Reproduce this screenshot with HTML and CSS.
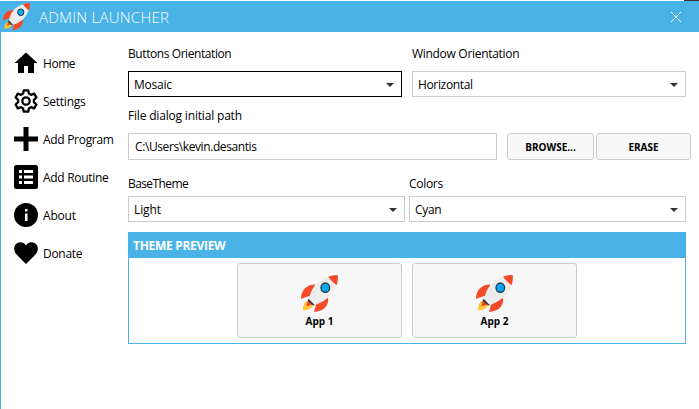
FILE: index.html
```html
<!DOCTYPE html>
<html lang="en">
<head>
<meta charset="utf-8">
<title>Admin Launcher</title>
<link rel="stylesheet" href="styles.css">
</head>
<body>
<svg class="defs" width="0" height="0">
  <symbol id="rocket" viewBox="0 0 108 108">
    <path fill="#f44a28" d="M0 70C0 46 15 28 42 28L30 60L10 66ZM38 108L44 86L79 66C83 93 62 107 38 108Z"/>
    <path fill="#ffc533" d="M20 73Q4 84 6 103Q27 103 37 88Z"/>
    <path fill="#e8412a" d="M20 74L16 91L34 86Z"/>
    <path fill="#263844" d="M22 69L41 88L35 88L20 75Z"/>
    <path fill="#ececec" d="M24 68C31 31 60 3 106 1C108 42 81 75 41 87Z"/>
    <path fill="#f44a28" d="M79 5Q92 0 107 0Q109 16 104 30Q90 20 79 5Z"/>
    <ellipse cx="71" cy="37" rx="12.5" ry="13.5" fill="#03a9f4" stroke="#263844" stroke-width="4"/>
  </symbol>
</svg>
<div class="window">
  <header class="titlebar">
    <svg class="logo"><use href="#rocket"/></svg>
    <h1>ADMIN LAUNCHER</h1>
    <svg class="close" viewBox="0 0 10 10"><path d="M0 0L10 10M10 0L0 10"/></svg>
  </header>
  <div class="body">
    <nav>
      <a><svg viewBox="0 0 24 24"><path d="M10 22v-7h4v7h6V12h3.500L12 1.500.5 12H4v10Z"/></svg><span class="t-home">Home</span></a>
      <a><svg viewBox="0 0 24 24"><g fill="none" stroke="#000" stroke-width="2.3" stroke-linejoin="round"><circle cx="12" cy="12" r="3.7"/><path d="M9.800 1.300h4.400l.7 3.300 2.100 1.200 3.200-1.100 2.200 3.800-2.500 2.300v2.400l2.500 2.300-2.200 3.800-3.200-1.100-2.100 1.200-.7 3.300H9.800l-.7-3.300L7 18.200l-3.200 1.100-2.200-3.800 2.500-2.300v-2.400L1.600 8.500l2.200-3.800L7 5.800l2.100-1.200Z"/></g></svg><span class="t-settings">Settings</span></a>
      <a><svg viewBox="0 0 24 24"><path d="M9.500 0h5v9.500H24v5h-9.500V24h-5v-9.500H0v-5h9.500Z"/></svg><span class="t-program">Add Program</span></a>
      <a><svg viewBox="0 0 24 24"><rect width="24" height="24" rx="2.5"/><path fill="#fff" d="M5 5h3v3H5zM10 5h9v3h-9zM5 10.500h3v3H5zM10 10.500h9v3h-9zM5 16h3v3H5zM10 16h9v3h-9z"/></svg><span class="t-routine">Add Routine</span></a>
      <a><svg viewBox="0 0 24 24"><circle cx="12" cy="12" r="12"/><path fill="#fff" d="M11 6h2.500v2.500H11zM11 10.500h2.500V18H11z"/></svg><span class="t-about">About</span></a>
      <a><svg viewBox="0 0 24 24"><path d="M12 23L3 14C-1 10-.5 4.500 3 2.200 6 .300 10 1 12 4.500 14 1 18 .300 21 2.200 24.500 4.500 25 10 21 14Z"/></svg><span class="t-donate">Donate</span></a>
    </nav>
    <main>
      <div class="row orient">
        <div class="field"><label><span class="t-buttons">Buttons Orientation</span></label><div class="select focus"><span class="t-mosaic">Mosaic</span><i></i></div></div>
        <div class="field"><label><span class="t-window">Window Orientation</span></label><div class="select"><span class="t-horizontal">Horizontal</span><i></i></div></div>
      </div>
      <label class="path-label"><span class="t-file">File dialog initial path</span></label>
      <div class="path">
        <div class="input"><span class="t-path">C:\Users\kevin.desantis</span></div>
        <button class="browse"><span class="t-browse">BROWSE...</span></button>
        <button class="erase"><span class="t-erase">ERASE</span></button>
      </div>
      <div class="row theme">
        <div class="field"><label><span class="t-base">BaseTheme</span></label><div class="select"><span class="t-light">Light</span><i></i></div></div>
        <div class="field"><label><span class="t-colors">Colors</span></label><div class="select"><span class="t-cyan">Cyan</span><i></i></div></div>
      </div>
      <section class="preview">
        <h2><span class="t-theme">THEME PREVIEW</span></h2>
        <div class="apps">
          <button class="app"><svg><use href="#rocket"/></svg><span>App 1</span></button>
          <button class="app"><svg><use href="#rocket"/></svg><span>App 2</span></button>
        </div>
      </section>
    </main>
  </div>
</div>
</body>
</html>
```
FILE: styles.css
```css
* { box-sizing: border-box; }
body { margin: 0; background: #fff; color: #000; font: 12px/16px "Open Sans", "Noto Sans", sans-serif; overflow: hidden; }
.defs { display: block; }
svg { flex: none; }
span { white-space: nowrap; }
.window { height: 409px; border-top: 1px solid transparent; background: linear-gradient(#333, #333) 684px 0 / 15px 1px no-repeat border-box; }
.titlebar { height: 31px; display: flex; align-items: center; background: #49b3e8; padding: 0 17px 0 3px; }
.logo { width: 27px; height: 27px; }
h1 { margin: 1px auto 0 9px; color: #fff; font-size: 15px; font-weight: 300; line-height: 20px; letter-spacing: 0.25px; }
.close { width: 10px; height: 10px; overflow: visible; margin-right: 1px; }
.close path { stroke: #fff; stroke-width: 1; }
.body { display: flex; height: 377px; border-left: 1px solid #49b3e8; }
nav { width: 127px; padding: 19px 0 0 13px; }
nav a { display: flex; align-items: center; gap: 5px; height: 24px; margin-bottom: 14px; }
nav span { padding-top: 2px; }
nav svg { width: 24px; height: 24px; }
main { width: 558px; padding-top: 14px; }
.row { display: flex; }
.orient { gap: 10px; }
.theme { gap: 4px; margin-top: 16px; }
.field { flex: 1; }
label { display: block; height: 16px; }
.select { display: flex; align-items: center; justify-content: space-between; height: 26px; border: 1px solid #ccc; padding: 1px 7px 0 5px; }
.orient .select { margin-top: 9px; }
.theme .select { margin-top: 4px; }
.focus { border-color: #000; }
.select i { border: 4px solid transparent; border-top-color: #333; border-bottom: 0; }
.path-label { margin-top: 11px; }
.path { display: flex; margin-top: 9px; height: 27px; width: 563px; }
.input { width: 369px; border: 1px solid #ccc; padding: 5px 6px; margin-right: 10px; }
button { font: bold 10px/14px "Open Sans", sans-serif; color: #000; background: #f7f7f7; border: 1px solid #ccc; border-radius: 3px; padding: 0; }
.browse { width: 87px; margin-right: 2px; }
.erase { width: 95px; }
.path button { padding-top: 1px; }
.preview { margin-top: 10px; height: 112px; border: 1px solid #49b3e8; }
h2 { margin: 0; height: 25px; padding-left: 4px; background: #49b3e8; color: #fff; font-size: 12px; line-height: 25px; font-weight: 700; }
.apps { display: flex; justify-content: center; gap: 10px; padding-top: 5px; }
.app { width: 165px; height: 75px; display: flex; flex-direction: column; align-items: center; padding-top: 11px; }
.app svg { width: 37px; height: 37px; }
.app span { margin-top: 2px; }

.t-home { letter-spacing: -0.45px; }
.t-settings { letter-spacing: -0.25px; }
.t-program, .t-routine { letter-spacing: -0.3px; }
.t-about { letter-spacing: -0.2px; }
.t-donate { letter-spacing: -0.3px; }
.t-buttons { letter-spacing: -0.42px; }
.t-window { letter-spacing: -0.3px; }
.t-mosaic { letter-spacing: -0.25px; }
.t-horizontal { letter-spacing: -0.35px; }
.t-file { letter-spacing: -0.18px; }
.t-path { letter-spacing: -0.4px; }
.t-base { letter-spacing: -0.6px; }
.t-colors, .t-cyan { letter-spacing: -0.3px; }
.t-light { letter-spacing: -0.1px; }
.t-theme { letter-spacing: -0.3px; }
```
